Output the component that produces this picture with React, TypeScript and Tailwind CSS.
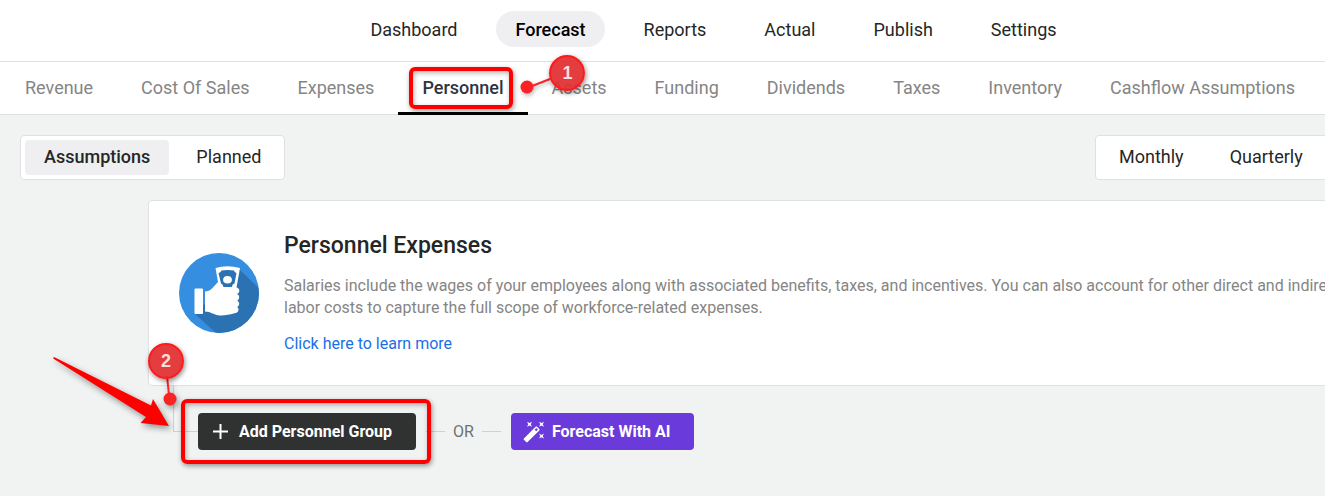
import React, { useState } from "react";

const mainNav = ["Dashboard", "Forecast", "Reports", "Actual", "Publish", "Settings"];

const subNav = [
  "Revenue",
  "Cost Of Sales",
  "Expenses",
  "Personnel",
  "Assets",
  "Funding",
  "Dividends",
  "Taxes",
  "Inventory",
  "Cashflow Assumptions",
];

const views = ["Assumptions", "Planned"];
const periods = ["Monthly", "Quarterly"];

function HandMoneyIcon() {
  return (
    <svg viewBox="0 0 80 80" className="size-20 shrink-0" aria-hidden="true">
      <defs>
        <clipPath id="disc">
          <circle cx="40" cy="40" r="40" />
        </clipPath>
      </defs>
      <circle cx="40" cy="40" r="40" fill="#358ee0" />
      <path clipPath="url(#disc)" d="M60 16L90 45V90H48L16 61L36 40Z" fill="#2b72b3" />
      <path d="M36.500 15Q48 11.500 61 15L56.500 40H41Z" fill="#fff" />
      <path d="M42.500 17.500Q48.500 16.300 55 17.500Q55.600 19.500 57.500 20L55.500 30.500Q53 31 53 34H44.500Q44 31 42 30.500L39.500 20Q41.700 19.500 42.500 17.500Z" fill="#2b72b3" />
      <ellipse cx="48.500" cy="26.800" rx="4.400" ry="3.800" fill="#fff" />
      <rect x="15.500" y="35.500" width="8.500" height="25.500" rx="1" fill="#fff" />
      <path
        d="M26 38.500C29 38.500 31 37.500 33 35.500L38.500 29.500C39.500 28.500 41 29 41.200 30.500C41.500 33 42.500 34.300 45 34.300H56C59 34.300 60.700 36 60.300 38.200C60 39.500 59 40.500 58 41C60 41.700 60.500 43.500 60 45.200C59.700 46.500 59 47.200 58.200 47.700C60 48.500 60.500 50.200 60 51.700C59.600 53 59 53.500 58 54C59.500 54.800 59.800 56.200 59.300 57.700C58.800 59.300 57.500 60 55.500 60.300C50 61.700 46 62.700 41 62.500C35 62.200 32 58.500 26 58.500Z"
        fill="#fff"
      />
    </svg>
  );
}

function MagicIcon() {
  return (
    <svg viewBox="0 0 22 22" className="size-[22px]" fill="#fff" aria-hidden="true">
      <path d="M.9 17.400L12.600 5.700Q13.300 5 14 5.700L16.300 8Q17 8.700 16.300 9.400L4.600 21.100Q3.900 21.800 3.200 21.100L.9 18.800Q.2 18.100 .9 17.400Z" />
      <path d="M11.700 8.700L13.300 7.100L14.900 8.700L13.300 10.300Z" fill="#6b3adb" />
      <path d="M4 .8L6.500 2.100L9 .8L7.700 3.300L9 5.800L6.500 4.500L4 5.800L5.300 3.300Z" />
      <path d="M16 .8L18.500 2.100L21 .8L19.700 3.300L21 5.800L18.500 4.500L16 5.800L17.300 3.300Z" />
      <path d="M16 12.600L18.500 13.900L21 12.600L19.700 15.100L21 17.600L18.500 16.300L16 17.600L17.300 15.100Z" />
    </svg>
  );
}

function Marker({ label, className }: { label: string; className: string }) {
  return (
    <span
      className={`absolute flex size-9 items-center justify-center rounded-full border-2 border-[#fb1b1e] bg-[#e12d30]/92 font-['Liberation_Sans',sans-serif] text-lg font-bold text-[#f9dcdc] shadow-[1px_2px_5px_rgba(0,0,0,0.45)] ${className}`}
    >
      {label}
    </span>
  );
}

function Toggle({
  options,
  value,
  onChange,
}: {
  options: string[];
  value: string;
  onChange: (option: string) => void;
}) {
  return (
    <div className="flex gap-2 rounded border border-[#dfe0e1] bg-white p-1">
      {options.map((option) => (
        <button
          key={option}
          type="button"
          onClick={() => onChange(option)}
          className={`h-[35px] rounded px-[19px] pb-[2px] text-lg ${
            value === option ? "bg-[#efeff1] font-medium" : ""
          }`}
        >
          {option}
        </button>
      ))}
    </div>
  );
}

function App() {
  const [page, setPage] = useState("Forecast");
  const [view, setView] = useState("Assumptions");
  const [period, setPeriod] = useState("");

  return (
    <div className="min-h-screen overflow-hidden bg-[#f1f3f3] font-['Roboto',sans-serif] text-[#252626]">
      <div className="min-w-[1427px]">
        <header className="border-b border-[#dfe0e1] bg-white pt-[11px] pb-[14px]">
          <nav className="flex justify-center gap-5">
            {mainNav.map((item) => (
              <button
                key={item}
                type="button"
                onClick={() => setPage(item)}
                className={`h-9 rounded-full px-[19px] pt-[2px] text-lg ${
                  page === item ? "bg-[#efeff1] font-medium text-black" : ""
                }`}
              >
                {item}
              </button>
            ))}
          </nav>
        </header>

        <nav className="flex h-[53px] border-b border-[#dfe0e1] bg-white pl-px text-lg text-[#858585]">
          {subNav.map((item) =>
            item === "Personnel" ? (
              <a
                key={item}
                href="#personnel"
                className="relative z-10 flex h-[53px] items-center border-b-3 border-black px-6 pt-[2px] font-medium text-[#30333f]"
              >
                {item}
                <span className="absolute top-[5px] left-[11px] h-[42px] w-[104px] rounded-md border-4 border-[#fe0000] shadow-[1px_2px_5px_rgba(0,0,0,0.4),inset_1px_2px_5px_rgba(0,0,0,0.3)]" />
                <svg
                  viewBox="0 0 40 24"
                  className="absolute top-3 left-[122px] h-6 w-10 drop-shadow-[1px_2px_2px_rgba(0,0,0,0.3)]"
                  aria-hidden="true"
                >
                  <path d="M7 14L30 5" stroke="#f92225" strokeWidth="2" />
                  <circle cx="7" cy="13" r="6.500" fill="#f92225" />
                </svg>
                <Marker label="1" className="-top-[7px] left-[151px]" />
              </a>
            ) : (
              <a key={item} href="#" className="flex items-center px-6">
                {item}
              </a>
            )
          )}
        </nav>

        <main>
          <div className="mx-5 mt-5 flex justify-between">
            <Toggle options={views} value={view} onChange={setView} />
            <div className="w-[312px]">
              <Toggle options={periods} value={period} onChange={setPeriod} />
            </div>
          </div>

          <section className="mt-5 mr-5 ml-[148px] flex items-center gap-[25px] rounded border border-[#dfe0e1] bg-white p-[30px]">
            <HandMoneyIcon />
            <div className="text-base leading-[22px]">
              <h1 className="text-[23px] leading-[30px] font-medium">Personnel Expenses</h1>
              <p className="mt-[14px] text-[#858585]">
                Salaries include the wages of your employees along with associated benefits,
                taxes, and incentives. You can also account for other direct and indirect labor
                costs to capture the full scope of workforce-related expenses.
              </p>
              <a href="#learn" className="mt-[14px] inline-block text-[#1a6fe8]">
                Click here to learn more
              </a>
            </div>
          </section>

          <div className="relative ml-[173px] flex pb-11">
            <span className="h-[46px] w-[25px] border-b border-l border-[#cfd1d1]" />
            <div className="mt-[27px] flex items-center">
              <button
                type="button"
                className="flex h-[37px] items-center gap-[11px] rounded bg-[#303231] pr-6 pl-[15px] text-base font-bold text-white"
              >
                <svg viewBox="0 0 15 15" className="size-[15px]" aria-hidden="true">
                  <path d="M7.500 0V15M0 7.500H15" stroke="#fff" strokeWidth="2" />
                </svg>
                Add Personnel Group
              </button>
              <span className="ml-[10px] h-px w-[19px] bg-[#cfd1d1]" />
              <span className="mx-2 text-base text-[#707171]">OR</span>
              <span className="mr-[10px] h-px w-[19px] bg-[#cfd1d1]" />
              <button
                type="button"
                className="flex h-[37px] items-center gap-[7px] rounded bg-[#6b3adb] pr-6 pl-3 text-base font-bold text-white"
              >
                <MagicIcon />
                Forecast With AI
              </button>
            </div>

            <span className="pointer-events-none absolute top-[13px] left-2 h-[65px] w-[250px] rounded-md border-4 border-[#fe0000] shadow-[1px_2px_5px_rgba(0,0,0,0.4),inset_1px_2px_5px_rgba(0,0,0,0.3)]" />
            <svg
              viewBox="0 0 150 100"
              className="pointer-events-none absolute -top-9 -left-[123px] h-25 w-[150px] drop-shadow-[2px_3px_3px_rgba(0,0,0,0.4)]"
              aria-hidden="true"
            >
              <path d="M3 8Q4 6.500 6 8L101 55.500L103 49L119 76L90.500 73L96 67L4 9Z" fill="#fe0000" />
              <path d="M117 26L119 45" stroke="#f92225" strokeWidth="2" />
              <circle cx="120" cy="49" r="6.500" fill="#f92225" />
            </svg>
            <Marker label="2" className="-top-[43px] -left-[25px]" />
          </div>
        </main>
      </div>
    </div>
  );
}

export default App;
